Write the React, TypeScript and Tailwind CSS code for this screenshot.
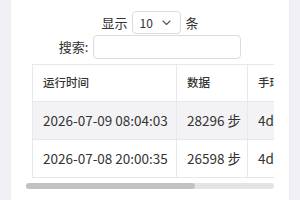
import React from 'react';

const rows = [
  { time: '2026-07-09 08:04:03', steps: '28296 步', device: '4d4f8a' },
  { time: '2026-07-08 20:00:35', steps: '26598 步', device: '4d4f8a' },
];

const App = () => {
  return (
    <div
      className="min-h-[200px] h-[200px] overflow-hidden bg-[#f1f1f5] px-[11px] text-[#333]"
      style={{ fontFamily: '"Noto Sans CJK SC", "Noto Sans", sans-serif' }}
    >
      <div className="h-full bg-white px-[15px] pt-[11px] shadow-[0_0_2px_rgba(0,0,0,0.06)]">
        {/* length + search controls */}
        <div className="flex items-center justify-center gap-[4px] text-[13px]">
          <span>显示</span>
          <div className="flex h-[23px] w-[49px] items-center justify-between rounded-[4px] border border-[#dcdcdc] pl-[7px] pr-[9px] text-[12px]">
            <span>10</span>
            <svg width="9" height="6" viewBox="0 0 9 6" fill="none">
              <path d="M1 1l3.5 3.5L8 1" stroke="#555" strokeWidth="1.1" strokeLinecap="round" strokeLinejoin="round" />
            </svg>
          </div>
          <span className="ml-[1px]">条</span>
        </div>
        <div className="mt-[1px] flex items-center justify-center gap-[5px] text-[13px]">
          <span>搜索:</span>
          <div className="h-[24px] w-[148px] rounded-[4px] border border-[#dcdcdc]" />
        </div>

        {/* table */}
        <div className="mt-[5px] w-[248px] overflow-hidden pl-[6px]">
          <table className="w-[335px] table-fixed border-collapse whitespace-nowrap text-[13.5px]">
            <colgroup>
              <col className="w-[144px]" />
              <col className="w-[71px]" />
              <col className="w-[120px]" />
            </colgroup>
            <thead>
              <tr className="h-[37px] bg-white text-[11.5px]">
                <th className="border border-[#e8e8ec] px-[10px] text-left font-medium">运行时间</th>
                <th className="border border-[#e8e8ec] px-[10px] text-left font-medium">数据</th>
                <th className="border border-[#e8e8ec] px-[10px] text-left font-medium">手环编号</th>
              </tr>
            </thead>
            <tbody>
              {rows.map((r, i) => (
                <tr key={r.time} className={i % 2 === 0 ? 'h-[38px] bg-[#f3f3f6]' : 'h-[38px] bg-white'}>
                  <td className="border border-[#e8e8ec] px-[10px]">{r.time}</td>
                  <td className="border border-[#e8e8ec] px-[10px]">{r.steps}</td>
                  <td className="border border-[#e8e8ec] px-[10px]">{r.device}</td>
                </tr>
              ))}
            </tbody>
          </table>
        </div>

        {/* horizontal scrollbar */}
        <div className="mt-[5px] h-[6px] w-[248px] rounded-full bg-[#e4e4e6]">
          <div className="h-full w-[169px] rounded-full bg-[#c2c2c4]" />
        </div>
      </div>
    </div>
  );
};

export default App;
